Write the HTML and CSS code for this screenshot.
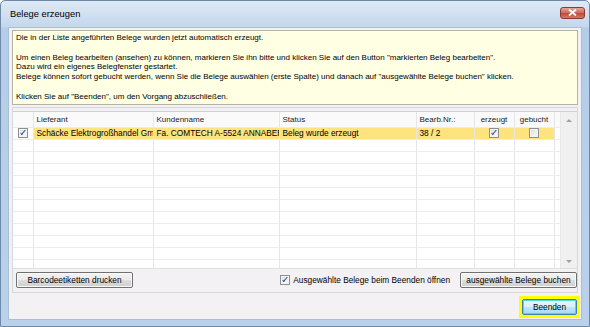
FILE: index.html
```html
<!DOCTYPE html>
<html lang="de">
<head>
    <meta charset="UTF-8">
    <title>Belege erzeugen</title>
    <link rel="stylesheet" href="styles.css">
</head>
<body>
<div class="window">
    <div class="titlebar">
        <span class="title">Belege erzeugen</span>
        <span class="close">
            <svg width="9" height="7" viewBox="0 0 9 7"><path d="M1 0.5 L8 6.5 M8 0.5 L1 6.5" stroke="#fff" stroke-width="1.8"/></svg>
        </span>
    </div>
    <div class="client">
        <div class="info">
            <p>Die in der Liste angeführten Belege wurden jetzt automatisch erzeugt.</p>
            <p>&nbsp;</p>
            <p>Um einen Beleg bearbeiten (ansehen) zu können, markieren Sie ihn bitte und klicken Sie auf den Button "markierten Beleg bearbeiten".</p>
            <p>Dazu wird ein eigenes Belegfenster gestartet.</p>
            <p>Belege können sofort gebucht werden, wenn Sie die Belege auswählen (erste Spalte) und danach auf "ausgewählte Belege buchen" klicken.</p>
            <p>&nbsp;</p>
            <p>Klicken Sie auf "Beenden", um den Vorgang abzuschließen.</p>
        </div>

        <div class="panel">
            <div class="grid">
                <div class="grid-body">
                    <table>
                        <colgroup>
                            <col class="c-sel"><col class="c-lief"><col class="c-kunde"><col class="c-status">
                            <col class="c-nr"><col class="c-erz"><col class="c-geb"><col>
                        </colgroup>
                        <thead>
                            <tr>
                                <th></th>
                                <th>Lieferant</th>
                                <th>Kundenname</th>
                                <th>Status</th>
                                <th>Bearb.Nr.:</th>
                                <th class="center">erzeugt</th>
                                <th class="center">gebucht</th>
                                <th class="filler"></th>
                            </tr>
                        </thead>
                        <tbody id="rows">
                            <tr class="selected">
                                <td class="sel"><span class="check on"></span></td>
                                <td>Schäcke Elektrogroßhandel GmbH</td>
                                <td>Fa. COMTECH A-5524 ANNABERG</td>
                                <td>Beleg wurde erzeugt</td>
                                <td>38 / 2</td>
                                <td class="center"><span class="check on"></span></td>
                                <td class="center"><span class="check"></span></td>
                                <td class="filler"></td>
                            </tr>
                        </tbody>
                    </table>
                </div>
                <div class="scrollbar">
                    <span class="arrow up"></span>
                    <span class="arrow down"></span>
                </div>
            </div>

            <div class="actions">
                <button class="btn wide">Barcodeetiketten drucken</button>
                <label class="option"><span class="check on"></span>Ausgewählte Belege beim Beenden öffnen</label>
                <button class="btn wide">ausgewählte Belege buchen</button>
            </div>
        </div>

        <div class="footer">
            <span class="highlight"><button class="btn default">Beenden</button></span>
        </div>
    </div>
</div>

<script>
    // empty rows to fill the visible grid area
    const body = document.getElementById("rows");
    for (let i = 0; i < 11; i++) {
        const row = document.createElement("tr");
        row.innerHTML = `<td class="sel"></td><td></td><td></td><td></td><td></td><td></td><td></td><td class="filler"></td>`;
        body.appendChild(row);
    }
</script>
</body>
</html>
```

FILE: styles.css
```css
html, body {
    margin: 0;
    padding: 0;
}
body {
    font-family: "Liberation Sans", Arial, sans-serif;
    font-size: 8px;
    color: #000;
    background: #fff;
}
.window {
    width: 590px;
    height: 327px;
    box-sizing: border-box;
    border: 1px solid #6f8aa8;
    border-radius: 5px 5px 0 0;
    background: linear-gradient(#dfe9f5, #c4d7ed 26px, #b5cde8 27px, #b9d1ea);
    display: flex;
    flex-direction: column;
    padding: 0 7px 6px 7px;
}
.titlebar {
    height: 26px;
    display: flex;
    align-items: center;
    justify-content: space-between;
    flex-shrink: 0;
}
.title {
    font-size: 9.3px;
    padding-left: 2px;
    color: #000;
}
.close {
    width: 23px;
    height: 10px;
    margin-right: -3px;
    margin-top: -3px;
    border: 1px solid #8a3a36;
    border-radius: 3px;
    background: linear-gradient(#e8a59b, #cf6d5f 45%, #c24b3a 55%, #d47a63);
    display: flex;
    align-items: center;
    justify-content: center;
}
.client {
    flex: 1;
    background: #f3f1f4;
    border: 1px solid #a9bfd6;
    display: flex;
    flex-direction: column;
    padding: 2px 3px 0 3px;
}
.info {
    background: #ffffe3;
    border: 1px solid #b4b4a0;
    box-shadow: inset 1px 1px 0 #fff;
    padding: 2px 4px 5px 3px;
    height: 75px;
    box-sizing: border-box;
}
.info p {
    margin: 0;
    line-height: 9.8px;
    white-space: nowrap;
}
.panel {
    margin-top: 2px;
    border: 1px solid #d6d6dc;
    height: 186px;
    box-sizing: border-box;
    display: flex;
    flex-direction: column;
}
.grid {
    margin-top: 3px;
    height: 156px;
    display: flex;
    background: #fff;
    border-top: 1px solid #d0d0d0;
    border-bottom: 1px solid #e0e0e0;
    overflow: hidden;
}
.grid-body {
    flex: 1;
    overflow: hidden;
}
table {
    width: 100%;
    border-collapse: collapse;
    table-layout: fixed;
}
col.c-sel { width: 20px; }
col.c-lief { width: 120px; }
col.c-kunde { width: 126px; }
col.c-status { width: 137px; }
col.c-nr { width: 58px; }
col.c-erz { width: 40px; }
col.c-geb { width: 40px; }
th, td {
    border-right: 1px solid #e6e6e6;
    border-bottom: 1px solid #ececec;
    padding: 0 3px;
    text-align: left;
    font-weight: normal;
    white-space: nowrap;
    overflow: hidden;
    text-overflow: clip;
}
th {
    height: 15px;
    background: #fafafa;
    color: #222;
}
td {
    height: 11px;
    line-height: 11px;
    font-size: 8.3px;
}
th.filler, td.filler {
    border-right: none;
}
.center {
    text-align: center;
}
tr.selected td {
    background: #ffe37f;
}
tr.selected td.sel, tr.selected td.filler {
    background: #fff;
}
td.sel {
    text-align: center;
    padding: 0;
}
.check {
    display: inline-block;
    width: 8px;
    height: 8px;
    border: 1px solid #8e8f8f;
    background: linear-gradient(135deg, #dcdcdc, #fdfdfd);
    box-shadow: inset 0 0 0 1px #f4f4f4;
    vertical-align: middle;
    position: relative;
    box-sizing: content-box;
    margin-top: -1px;
}
.check.on::after {
    content: "";
    position: absolute;
    left: 3px;
    top: 0px;
    width: 1px;
    height: 5px;
    border: solid #2d4b96;
    border-width: 0 1.5px 1.5px 0;
    transform: rotate(40deg);
}
.scrollbar {
    width: 16px;
    background: #f0f0f0;
    border-left: 1px solid #e8e8e8;
    display: flex;
    flex-direction: column;
    justify-content: space-between;
    align-items: center;
    padding: 7px 0 5px;
    flex-shrink: 0;
}
.arrow {
    width: 0;
    height: 0;
    border-left: 3px solid transparent;
    border-right: 3px solid transparent;
}
.arrow.up {
    border-bottom: 3px solid #a0a0a0;
}
.arrow.down {
    border-top: 3px solid #a0a0a0;
}
.actions {
    display: flex;
    align-items: center;
    padding: 3px 0 0 3px;
}
.btn {
    font-family: "Liberation Sans", Arial, sans-serif;
    font-size: 8.3px;
    color: #000;
    height: 16px;
    padding: 0;
    white-space: nowrap;
    border: 1px solid #707070;
    border-radius: 2px;
    background: linear-gradient(#f2f2f2, #ebebeb 50%, #dddddd 51%, #cfcfcf);
    box-shadow: inset 0 0 0 1px #fbfbfb;
}
.btn.wide {
    width: 117px;
}
.option {
    margin-left: auto;
    margin-right: 10px;
    display: flex;
    align-items: center;
    font-size: 8.3px;
}
.option .check {
    margin: 0 3px 0 0;
}
.footer {
    display: flex;
    justify-content: flex-end;
    padding-top: 3px;
}
.highlight {
    border: 3px solid #ffff00;
    display: flex;
    margin-right: -2px;
}
.btn.default {
    width: 55px;
    height: 16px;
    border-color: #3c7fb1;
    box-shadow: inset 0 0 0 1px #48d8f8;
    background: linear-gradient(#eaf6fd, #d9f0fc 50%, #bee6fd 51%, #a7d9f5);
}
```
